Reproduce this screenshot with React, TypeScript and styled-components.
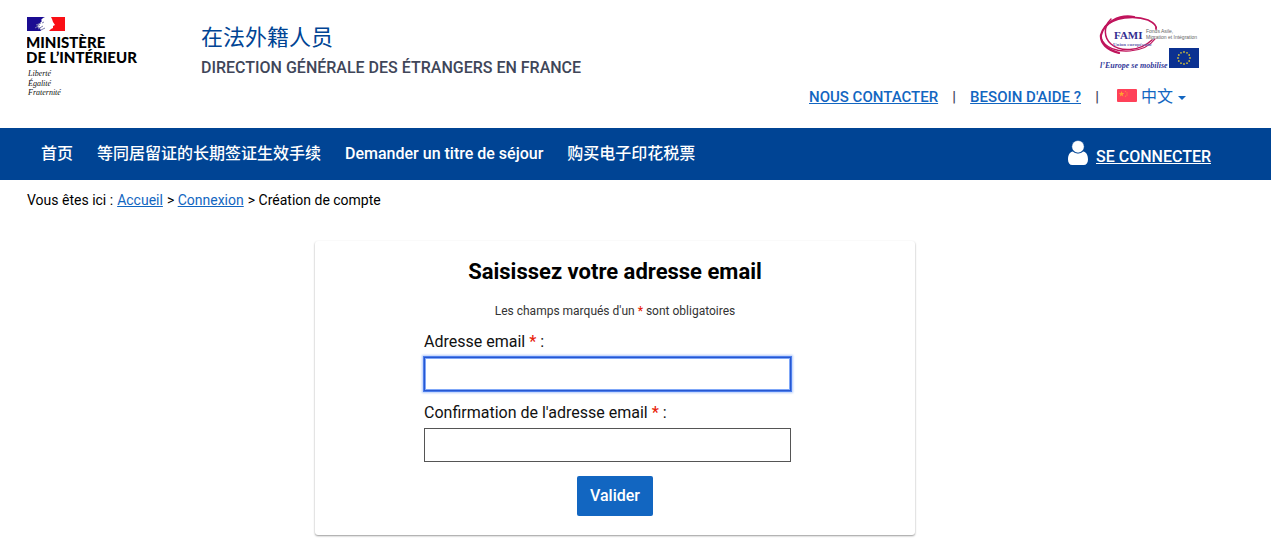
import React from "react";
import styled, { createGlobalStyle } from "styled-components";

const GlobalStyle = createGlobalStyle`
  *, *::before, *::after { box-sizing: border-box; }
  body {
    margin: 0;
    background: #fff;
    color: #000;
    font-family: Roboto, "Noto Sans CJK SC", sans-serif;
    font-size: 16px;
    line-height: 24px;
  }
  h1, h2, p, ul, ol { margin: 0; padding: 0; }
  ul, ol { list-style: none; }
`;

const Container = styled.div`
  max-width: 1230px;
`;

const HeaderBar = styled(Container)`
  display: flex;
  align-items: flex-start;
  min-height: 128px;
  padding: 15px 31px 0 27px;
`;

const Titles = styled.div`
  margin: 8px 0 0 54px;
  flex: 1;
`;

const SiteTitle = styled.p`
  color: #004494;
  font-size: 22px;
  line-height: 30px;
`;

const SiteSubtitle = styled.p`
  color: #404659;
  font-weight: 500;
  line-height: 30px;
`;

const HeaderSide = styled.div`
  display: flex;
  flex-direction: column;
  align-items: flex-end;
  gap: 12px;
`;

const HeaderLinks = styled.ul`
  display: flex;
  align-items: center;
  margin-right: 12px;
  font-size: 15px;
`;

const HeaderItem = styled.li`
  display: flex;
  align-items: center;
  font-weight: 500;

  & + &::before {
    content: "|";
    width: 32px;
    color: #404659;
    text-align: center;
  }
`;

const Link = styled.a`
  color: #1266c1;
  text-decoration: underline;
`;

const Language = styled.label`
  display: flex;
  align-items: center;
  gap: 4px;
  padding-left: 4px;
  font-size: 16px;
`;

const LanguageSelect = styled.select`
  appearance: none;
  width: 32px;
  margin: 0;
  padding: 0;
  border: 0;
  background: none;
  color: #1266c1;
  font: inherit;
  font-weight: 400;
`;

const NavBar = styled.nav`
  background: #004494;
`;

const NavInner = styled(Container)`
  display: flex;
  align-items: center;
  justify-content: space-between;
  min-height: 52px;
  padding: 0 19px 0 41px;
`;

const NavList = styled.ul`
  display: flex;
  gap: 24px;
`;

const NavLink = styled.a`
  color: #fff;
  font-weight: 500;
  text-decoration: none;
`;

const LoginLink = styled.a`
  display: flex;
  align-items: center;
  gap: 8px;
  color: #fff;
  font-weight: 500;
`;

const LoginText = styled.span`
  padding-top: 6px;
  text-decoration: underline;
`;

const Breadcrumb = styled.ol`
  display: flex;
  gap: 4px;
  padding: 8px 27px;
  font-size: 14px;
`;

const Crumb = styled.li`
  & + & + &::before {
    content: "> ";
  }
`;

const Card = styled.main`
  width: 100%;
  max-width: 600px;
  margin: 21px auto;
  padding: 17px 24px 19px;
  border-radius: 3px;
  box-shadow: 0 1px 2px rgba(0, 0, 0, 0.4);
`;

const CardTitle = styled.h1`
  font-size: 22px;
  font-weight: 700;
  line-height: 28px;
  text-align: center;
`;

const Notice = styled.p`
  margin: 15px 0 8px;
  color: #333;
  font-size: 12px;
  line-height: 20px;
  text-align: center;
`;

const Required = styled.span`
  color: #e8230c;
  font-weight: 500;
`;

const Form = styled.form`
  display: flex;
  flex-direction: column;
  max-width: 382px;
  margin: 0 auto;
`;

const Field = styled.div`
  padding-right: 15px;
  margin-bottom: 9px;
`;

const Label = styled.label`
  display: block;
  margin-bottom: 2px;
  color: #111;
  line-height: 26px;
`;

const Input = styled.input<{ $active?: boolean }>`
  display: block;
  width: 100%;
  height: 34px;
  padding: 4px 8px;
  border: 1px solid ${(p) => (p.$active ? "#2857d0" : "#555")};
  border-radius: 0;
  outline: 0;
  background: #fff;
  box-shadow: ${(p) =>
    p.$active
      ? "inset 0 0 0 1px #7fa7f8, 0 0 0 1px #4d7fec, 0 0 2px 2px #b4cbfb"
      : "none"};
  font: inherit;
`;

const SubmitButton = styled.button`
  align-self: center;
  height: 40px;
  margin-top: 5px;
  padding: 0 13px;
  border: 0;
  border-radius: 2px;
  background: #1266c1;
  color: #fff;
  font: inherit;
  font-weight: 500;
`;

function MinistryLogo() {
  return (
    <svg width="120" height="84" viewBox="0 0 120 84" role="img" aria-label="Ministère de l'Intérieur">
      <path fill="#1b0c92" d="M0 2h18l-2 1-2 2 1 1-2 2-2 2-1 2 3 1 1 3H0z" />
      <path fill="#fa0f15" d="M24 2h14v14H22l2-2 2-1v-2l2-1-2-3-1-3z" />
      <path d="M9 10l5-2M8 13l5-3M11 14l5-3M14 15l4-2M15 8l2-1" stroke="#7b7cad" strokeWidth="1" fill="none" />
      <g fontFamily="Lato, sans-serif" fontWeight="900" fontSize="15">
        <text x="-1" y="33">MINISTÈRE</text>
        <text x="-1" y="48">DE L’INTÉRIEUR</text>
      </g>
      <g fontFamily="Liberation Serif, serif" fontStyle="italic" fontSize="8" fill="#111">
        <text x="1" y="61">Liberté</text>
        <text x="1" y="71">Égalité</text>
        <text x="1" y="80">Fraternité</text>
      </g>
    </svg>
  );
}

function FamiLogo() {
  const stars = Array.from({ length: 12 }, (_, i) => {
    const angle = (i * Math.PI) / 6;
    return <circle key={i} cx={85 + 6 * Math.sin(angle)} cy={43 - 6 * Math.cos(angle)} r="0.9" fill="#c9b93c" />;
  });
  return (
    <svg width="100" height="58" viewBox="0 0 100 58" role="img" aria-label="FAMI, l'Europe se mobilise">
      <g fill="none" stroke="#c0145c" strokeLinecap="round">
        <path strokeWidth="2.2" d="M35 2C20 -1 5 8 2 20c-1 8 6 15 18 18" />
        <path strokeWidth="1.8" d="M6 12C14 2 36 0 49 5c6 3 9 6 8 9" />
        <path strokeWidth="1.5" d="M12 4C4 12 5 23 12 29c9 8 28 8 41-4" />
        <path strokeWidth="1.2" d="M2 23c4 10 16 14 29 13 11-1 20-5 25-12" />
      </g>
      <g fontFamily="Liberation Serif, serif" fontWeight="700" fill="#332d91">
        <text x="15" y="24" fontSize="11">FAMI</text>
        <text x="14" y="31" fontSize="5" fill="#6a66ac">Union européenne</text>
      </g>
      <g fontFamily="Liberation Sans, sans-serif" fontSize="5" fill="#666">
        <text x="47" y="18">Fonds Asile,</text>
        <text x="47" y="24">Migration et Intégration</text>
      </g>
      <text x="1" y="53" fontFamily="Liberation Serif, serif" fontStyle="italic" fontWeight="700" fontSize="8" fill="#343a9a">
        l’Europe se mobilise
      </text>
      <rect x="70" y="33" width="30" height="20" fill="#0b3191" />
      {stars}
    </svg>
  );
}

function ChinaFlag() {
  return (
    <svg width="20" height="16" viewBox="0 0 20 16" aria-hidden="true">
      <rect width="20" height="13" rx="1" fill="#ff4159" />
      <path fill="#ffa52e" d="M4.500 2l.8 2 2 .1-1.600 1.300.6 2-1.800-1.100L2.800 7.400l.6-2L1.800 4.100l2-.1z" />
      <g fill="#ff8040">
        <circle cx="8.500" cy="2.500" r=".7" />
        <circle cx="10" cy="4" r=".7" />
        <circle cx="10" cy="6" r=".7" />
        <circle cx="8.500" cy="7.300" r=".7" />
      </g>
    </svg>
  );
}

function UserIcon() {
  return (
    <svg width="20" height="28" viewBox="0 0 20 28" aria-hidden="true">
      <path
        fill="#fff"
        d="M4.800 11.500C2 11.900 0 14.500 0 19.500C0 23 1.700 25 4.300 25h11.400C18.300 25 20 23 20 19.500c0-5-2-7.600-4.800-8C13.900 12.700 12 13.400 10 13.400s-3.900-.7-5.200-1.900z"
      />
      <circle cx="10" cy="6.700" r="6.200" fill="#fff" stroke="#004494" strokeWidth=".5" />
    </svg>
  );
}

const navItems = ["首页", "等同居留证的长期签证生效手续", "Demander un titre de séjour", "购买电子印花税票"];

export default function App() {
  return (
    <>
      <GlobalStyle />
      <header>
        <HeaderBar>
          <MinistryLogo />
          <Titles>
            <SiteTitle>在法外籍人员</SiteTitle>
            <SiteSubtitle>DIRECTION GÉNÉRALE DES ÉTRANGERS EN FRANCE</SiteSubtitle>
          </Titles>
          <HeaderSide>
            <FamiLogo />
            <HeaderLinks>
              <HeaderItem>
                <Link href="#contact">NOUS CONTACTER</Link>
              </HeaderItem>
              <HeaderItem>
                <Link href="#aide">BESOIN D'AIDE ?</Link>
              </HeaderItem>
              <HeaderItem>
                <Language>
                  <ChinaFlag />
                  <LanguageSelect aria-label="Langue" defaultValue="zh">
                    <option value="zh">中文</option>
                  </LanguageSelect>
                  <svg width="10" height="6" viewBox="0 0 10 6" aria-hidden="true">
                    <path d="M1 2h8L5 6z" fill="#1266c1" />
                  </svg>
                </Language>
              </HeaderItem>
            </HeaderLinks>
          </HeaderSide>
        </HeaderBar>
        <NavBar>
          <NavInner>
            <NavList>
              {navItems.map((item) => (
                <li key={item}>
                  <NavLink href="#menu">{item}</NavLink>
                </li>
              ))}
            </NavList>
            <LoginLink href="#connexion">
              <UserIcon />
              <LoginText>SE CONNECTER</LoginText>
            </LoginLink>
          </NavInner>
        </NavBar>
      </header>
      <Container>
        <Breadcrumb>
          <Crumb>Vous êtes ici :</Crumb>
          <Crumb>
            <Link href="#accueil">Accueil</Link>
          </Crumb>
          <Crumb>
            <Link href="#connexion">Connexion</Link>
          </Crumb>
          <Crumb>Création de compte</Crumb>
        </Breadcrumb>
        <Card>
          <CardTitle>Saisissez votre adresse email</CardTitle>
          <Notice>
            Les champs marqués d'un <Required>*</Required> sont obligatoires
          </Notice>
          <Form>
            <Field>
              <Label htmlFor="email">
                Adresse email <Required>*</Required> :
              </Label>
              <Input id="email" type="email" $active />
            </Field>
            <Field>
              <Label htmlFor="email-confirm">
                Confirmation de l'adresse email <Required>*</Required> :
              </Label>
              <Input id="email-confirm" type="email" />
            </Field>
            <SubmitButton type="submit">Valider</SubmitButton>
          </Form>
        </Card>
      </Container>
    </>
  );
}
